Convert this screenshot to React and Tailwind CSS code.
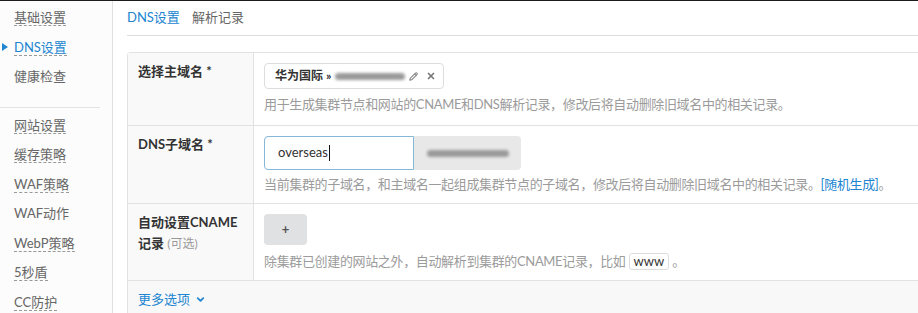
import React from "react";
import { Pencil, X, ChevronDown } from "lucide-react";

const font = { fontFamily: "Lato, 'Noto Sans CJK SC', sans-serif" };

const groupA = [
  { name: "基础设置", dashed: true },
  { name: "DNS设置", dashed: true, active: true },
  { name: "健康检查", dashed: false },
];

const groupB = [
  { name: "网站设置", dashed: true },
  { name: "缓存策略", dashed: true },
  { name: "WAF策略", dashed: true },
  { name: "WAF动作", dashed: false },
  { name: "WebP策略", dashed: true },
  { name: "5秒盾", dashed: true },
  { name: "CC防护", dashed: true },
];

function MenuItem({ item }) {
  return (
    <div className="flex h-[29.5px] items-center">
      <div className="flex w-[14px] items-center justify-start pl-[2px]">
        {item.active && (
          <svg width="6" height="8" viewBox="0 0 6 8">
            <path d="M0 0 L6 4 L0 8 Z" fill="#2185d0" />
          </svg>
        )}
      </div>
      <span
        className={
          "inline-block text-[13px] leading-[16px] " +
          (item.active ? "text-[#2185d0] " : "text-[#666] ") +
          (item.dashed ? "border-b border-dashed border-[#999]" : "border-b border-transparent")
        }
      >
        {item.name}
      </span>
    </div>
  );
}

function Blurred({ width }) {
  return (
    <span
      className="inline-block h-[7px] rounded-sm bg-[#9a9a9a] blur-[1.5px]"
      style={{ width }}
    />
  );
}

function Row({ label, children, bottom = "pb-[12px]" }) {
  return (
    <div className="grid grid-cols-[126px_1fr] border-b border-[#e2e2e2]">
      <div className="border-r border-[#e2e2e2] bg-[#f9f9f9] pl-[10px] pt-[8px] text-[13px] font-bold leading-[21px] text-[#333]">
        {label}
      </div>
      <div className={"px-[10px] pt-[10px] " + bottom}>{children}</div>
    </div>
  );
}

function Help({ children, top = "mt-[6px]" }) {
  return (
    <div
      className={
        top + " whitespace-nowrap text-[13px] leading-[18px] tracking-[-0.35px] text-[#9b9b9b]"
      }
    >
      {children}
    </div>
  );
}

export default function App() {
  return (
    <div className="h-[313px] w-[918px] overflow-hidden bg-white" style={font}>
      <div className="h-px bg-[#1b1c1d]" />
      <div className="flex h-[312px]">
        <aside className="w-[113px] shrink-0 border-r border-[#e0e0e0] bg-[#fcfcfc] pt-[2px]">
          {groupA.map((item) => (
            <MenuItem key={item.name} item={item} />
          ))}
          <div className="mt-[15px] mb-[3px] h-px w-[100px] bg-[#e4e4e4]" />
          {groupB.map((item) => (
            <MenuItem key={item.name} item={item} />
          ))}
        </aside>

        <main className="min-w-0 flex-1 pl-[14px]">
          <div className="flex h-[35px] items-center gap-[12px] border-b border-[#ddd] text-[13px]">
            <span className="text-[#2185d0]">DNS设置</span>
            <span className="text-[#666]">解析记录</span>
          </div>

          <div className="mt-[16px] rounded-tl-[4px] border-t border-l border-[#e2e2e2]">
            <Row label="选择主域名 *">
              <div className="flex h-[26px] w-[180px] items-center rounded-[4px] border border-[#ddd] pl-[10px] text-[12px]">
                <span className="font-bold text-[#333]">华为国际 »</span>
                <span className="ml-[4px] flex items-center">
                  <Blurred width={70} />
                </span>
                <Pencil className="ml-[4px] h-[9px] w-[9px] text-[#888]" strokeWidth={3} />
                <X className="ml-[8px] h-[10px] w-[10px] text-[#777]" strokeWidth={4} />
              </div>
              <Help>用于生成集群节点和网站的CNAME和DNS解析记录，修改后将自动删除旧域名中的相关记录。</Help>
            </Row>

            <Row label="DNS子域名 *" bottom="pb-[10px]">
              <div className="flex h-[34px]">
                <div className="flex w-[150px] items-center rounded-l-[4px] border border-[#85b7d9] pl-[13px] text-[13px] text-[#333]">
                  overseas
                  <span className="ml-px inline-block h-[16px] w-px bg-[#111]" />
                </div>
                <div className="flex w-[107px] items-center justify-center rounded-r-[4px] bg-[#e8e8e8]">
                  <Blurred width={82} />
                </div>
              </div>
              <Help top="mt-[5px]">
                当前集群的子域名，和主域名一起组成集群节点的子域名，修改后将自动删除旧域名中的相关记录。
                <span className="text-[#2185d0]">[随机生成]</span>。
              </Help>
            </Row>

            <Row
              bottom="pb-[10px]"
              label={
                <>
                  自动设置CNAME
                  <br />
                  记录 <span className="text-[12px] font-normal text-[#999]">(可选)</span>
                </>
              }
            >
              <div className="flex h-[31px] w-[43px] items-center justify-center rounded-[4px] bg-[#e0e1e2] text-[13px] font-bold text-[#555]">
                +
              </div>
              <Help top="mt-[7px]">
                除集群已创建的网站之外，自动解析到集群的CNAME记录，比如
                <span className="mx-[3px] inline-block rounded-[3px] border border-[#ddd] bg-white px-[4px] leading-[15px] tracking-normal text-[#333]">
                  www
                </span>
                。
              </Help>
            </Row>

            <div className="h-[40px] bg-[#f8f8f9] pl-[10px] pt-[8px]">
              <span className="flex items-center gap-[5px] text-[13px] leading-[20px] text-[#2185d0]">
                更多选项
                <ChevronDown className="h-[11px] w-[11px]" strokeWidth={4} />
              </span>
            </div>
          </div>
        </main>
      </div>
    </div>
  );
}
